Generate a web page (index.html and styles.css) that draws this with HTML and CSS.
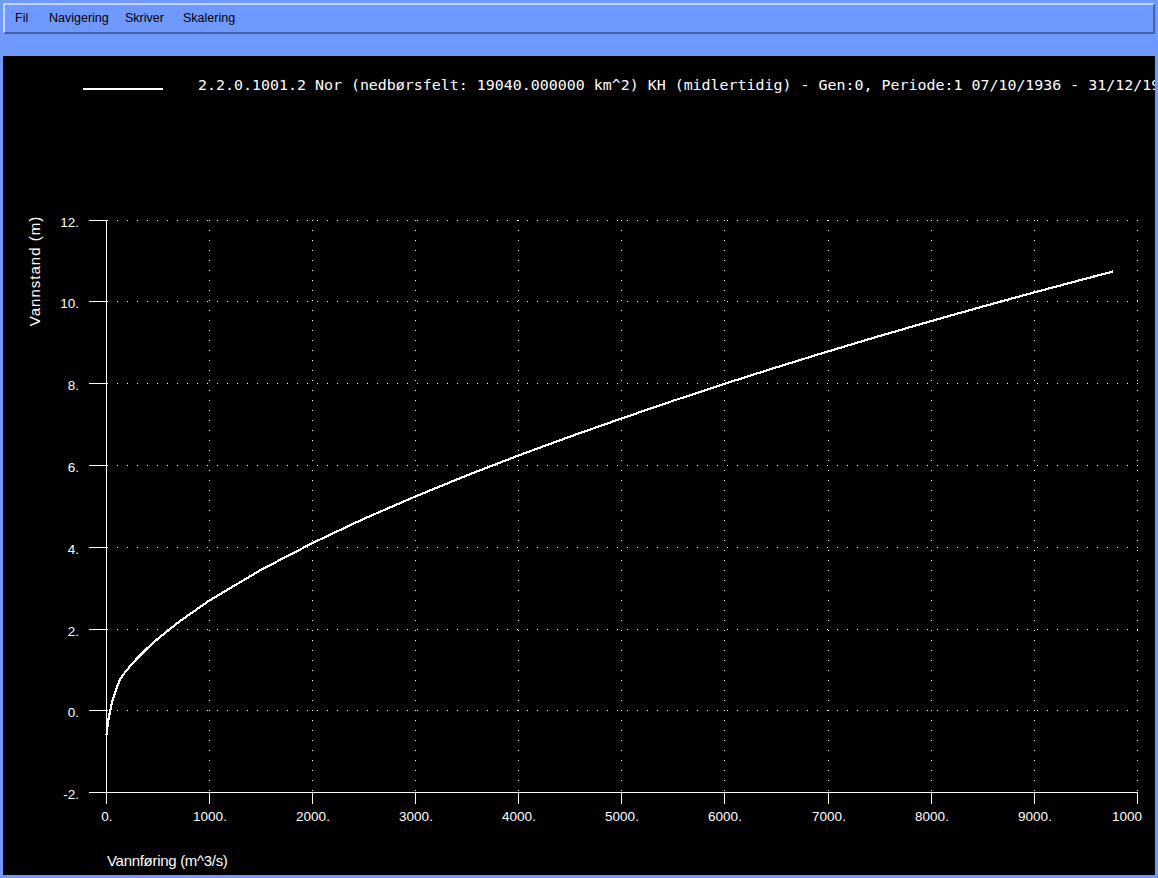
FILE: index.html
```html
<!DOCTYPE html>
<html lang="no">
<head>
<meta charset="utf-8">
<title>Vannføringskurve</title>
<link rel="stylesheet" href="styles.css">
</head>
<body>
<div class="app">
  <nav class="menubar">
    <span class="menu-item">Fil</span>
    <span class="menu-item">Navigering</span>
    <span class="menu-item">Skriver</span>
    <span class="menu-item">Skalering</span>
  </nav>
  <main class="plot">
    <svg class="chart" width="1152" height="819" viewBox="3 56 1152 819" xmlns="http://www.w3.org/2000/svg">
      <defs>
        <clipPath id="lastclip"><rect x="1100" y="800" width="42" height="30"/></clipPath>
      </defs>
      <!-- legend -->
      <line class="legend-line" x1="83" y1="89" x2="163" y2="89"/>
      <text class="legend-text" x="198" y="89.5">2.2.0.1001.2 Nor (nedbørsfelt: 19040.000000 km^2) KH (midlertidig) - Gen:0, Periode:1 07/10/1936 - 31/12/1999</text>

      <!-- horizontal grid -->
      <line class="grid" x1="107" y1="220.5" x2="1138" y2="220.5"/>
      <line class="grid" x1="107" y1="301.5" x2="1138" y2="301.5"/>
      <line class="grid" x1="107" y1="383.5" x2="1138" y2="383.5"/>
      <line class="grid" x1="107" y1="465.5" x2="1138" y2="465.5"/>
      <line class="grid" x1="107" y1="547.5" x2="1138" y2="547.5"/>
      <line class="grid" x1="107" y1="629.5" x2="1138" y2="629.5"/>
      <line class="grid" x1="107" y1="710.5" x2="1138" y2="710.5"/>
      <!-- vertical grid -->
      <line class="grid" x1="209.5" y1="220" x2="209.5" y2="793"/>
      <line class="grid" x1="312.5" y1="220" x2="312.5" y2="793"/>
      <line class="grid" x1="415.5" y1="220" x2="415.5" y2="793"/>
      <line class="grid" x1="518.5" y1="220" x2="518.5" y2="793"/>
      <line class="grid" x1="621.5" y1="220" x2="621.5" y2="793"/>
      <line class="grid" x1="724.5" y1="220" x2="724.5" y2="793"/>
      <line class="grid" x1="828.5" y1="220" x2="828.5" y2="793"/>
      <line class="grid" x1="931.5" y1="220" x2="931.5" y2="793"/>
      <line class="grid" x1="1034.5" y1="220" x2="1034.5" y2="793"/>
      <line class="grid" x1="1137.5" y1="220" x2="1137.5" y2="793"/>

      <!-- axes and ticks -->
      <path class="axis" d="M106.5 220 V793 M89 792.5 H1138
        M89 220.5 H106 M89 301.5 H106 M89 383.5 H106 M89 465.5 H106 M89 547.5 H106 M89 629.5 H106 M89 710.5 H106
        M106.5 793 V804 M209.5 793 V804 M312.5 793 V804 M415.5 793 V804 M518.5 793 V804 M621.5 793 V804
        M724.5 793 V804 M828.5 793 V804 M931.5 793 V804 M1034.5 793 V804 M1137.5 793 V804"/>

      <!-- y tick labels -->
      <text class="tick ytick" x="79" y="227">12.</text>
      <text class="tick ytick" x="79" y="308">10.</text>
      <text class="tick ytick" x="79" y="390">8.</text>
      <text class="tick ytick" x="79" y="472">6.</text>
      <text class="tick ytick" x="79" y="554">4.</text>
      <text class="tick ytick" x="79" y="636">2.</text>
      <text class="tick ytick" x="79" y="717">0.</text>
      <text class="tick ytick" x="79" y="799">-2.</text>

      <!-- x tick labels -->
      <text class="tick xtick" x="107" y="821">0.</text>
      <text class="tick xtick" x="210" y="821">1000.</text>
      <text class="tick xtick" x="313" y="821">2000.</text>
      <text class="tick xtick" x="416" y="821">3000.</text>
      <text class="tick xtick" x="519" y="821">4000.</text>
      <text class="tick xtick" x="622" y="821">5000.</text>
      <text class="tick xtick" x="725" y="821">6000.</text>
      <text class="tick xtick" x="829" y="821">7000.</text>
      <text class="tick xtick" x="932" y="821">8000.</text>
      <text class="tick xtick" x="1035" y="821">9000.</text>
      <text class="tick" x="1112" y="821" clip-path="url(#lastclip)">10000.</text>

      <!-- axis titles -->
      <text class="title ytitle" transform="translate(40 271) rotate(-90)">Vannstand (m)</text>
      <text class="title" x="107" y="866">Vannføring (m^3/s)</text>

      <!-- rating curve -->
      <polyline class="curve" points="106.5,735 108.3,720 111.7,703.5 116,690 120,679.1 126.6,670.2 136.9,658.6 147.2,648.3 157.6,639 178.2,622.4 209.1,600.7 260.7,570 312.2,543.2 363.8,518.8 415.3,496.5 466.9,475.4 518.4,455.5 570,436.6 621.5,418.5 673.1,400.8 724.6,383.8 776.2,367.4 827.7,351.5 879.3,336.1 930.8,321.2 982.4,306.6 1033.9,292.5 1080,280.2 1113,271.5"/>
    </svg>
  </main>
</div>
</body>
</html>
```

FILE: styles.css
```css
html, body {
  margin: 0;
  padding: 0;
}

body {
  width: 1158px;
  height: 878px;
  overflow: hidden;
  background: #7099ff;
}

.app {
  box-sizing: border-box;
  width: 1158px;
  height: 878px;
  padding: 3px;
  display: flex;
  flex-direction: column;
  gap: 22px;
}

.menubar {
  box-sizing: border-box;
  height: 31px;
  flex: none;
  display: grid;
  grid-template-columns: 34px 76px 58px auto;
  align-items: center;
  padding-left: 10px;
  border-top: 2px solid #c2d5ff;
  border-left: 2px solid #c2d5ff;
  border-bottom: 2px solid #4262a6;
  border-right: 2px solid #4262a6;
  background: #7099ff;
  font-family: "Liberation Sans", Arial, sans-serif;
  font-size: 12.5px;
  line-height: 27px;
  color: #000;
}

.menu-item {
  white-space: nowrap;
}

.plot {
  flex: none;
  height: 819px;
  background: #000;
  overflow: hidden;
}

.chart {
  display: block;
}

.legend-line {
  stroke: #fff;
  stroke-width: 2;
  shape-rendering: crispEdges;
}

.legend-text {
  fill: #fff;
  font-family: "DejaVu Sans Mono", "Liberation Mono", monospace;
  font-size: 14.95px;
}

.grid {
  stroke: #fff;
  stroke-width: 1;
  stroke-dasharray: 1 9;
  shape-rendering: crispEdges;
}

.axis {
  fill: none;
  stroke: #fff;
  stroke-width: 1;
  shape-rendering: crispEdges;
}

.tick {
  fill: #fff;
  font-family: "Liberation Sans", Arial, sans-serif;
  font-size: 13.5px;
}

.ytick {
  text-anchor: end;
}

.xtick {
  text-anchor: middle;
}

.title {
  fill: #fff;
  font-family: "Liberation Sans", Arial, sans-serif;
  font-size: 15px;
  letter-spacing: -0.3px;
}

.ytitle {
  text-anchor: middle;
  letter-spacing: 1px;
}

.curve {
  fill: none;
  stroke: #fff;
  stroke-width: 2.2;
  stroke-linejoin: round;
  shape-rendering: crispEdges;
}
```
